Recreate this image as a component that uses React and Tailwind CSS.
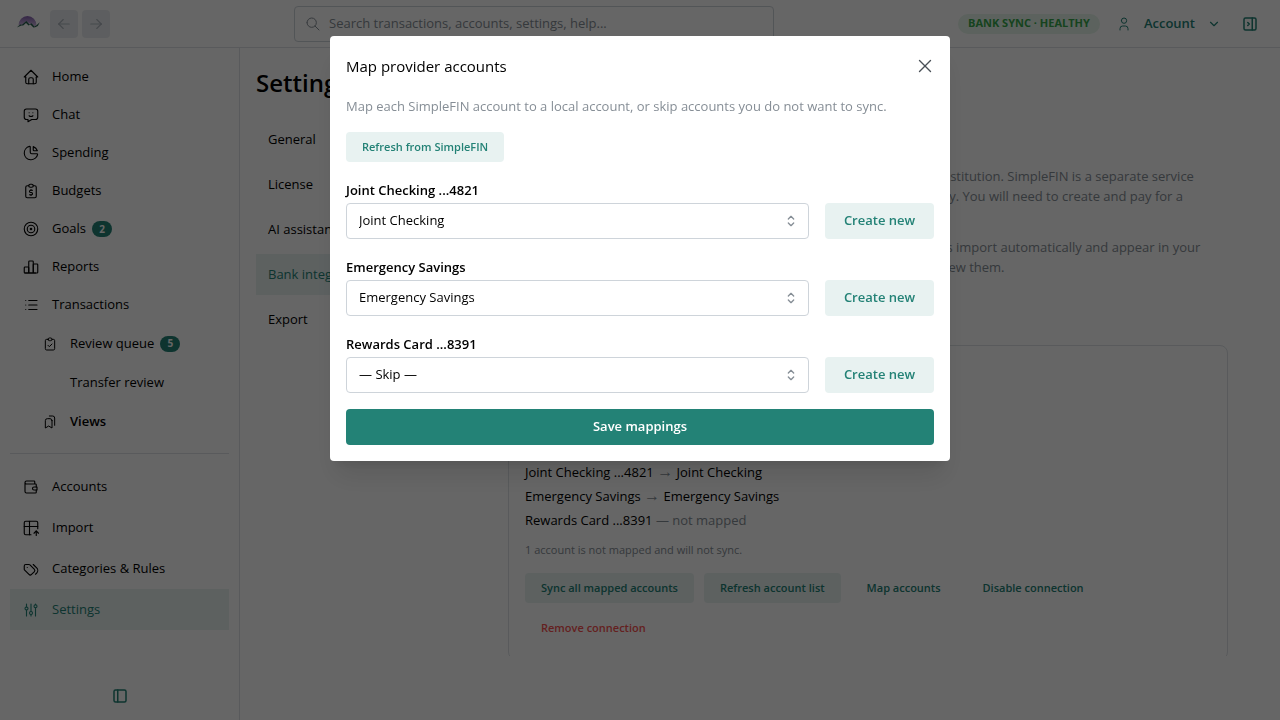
import {
  TbAdjustments,
  TbArrowLeft,
  TbArrowRight,
  TbBookmarks,
  TbChartBar,
  TbChartPie,
  TbChevronDown,
  TbClipboardCheck,
  TbHome,
  TbLayoutSidebar,
  TbLayoutSidebarRightCollapse,
  TbList,
  TbMessageChatbot,
  TbReportMoney,
  TbSearch,
  TbSelector,
  TbTableImport,
  TbTags,
  TbTarget,
  TbUser,
  TbWallet,
  TbX,
} from 'react-icons/tb';
import clsx from 'clsx';

const primaryNav = [
  { label: 'Home', icon: TbHome },
  { label: 'Chat', icon: TbMessageChatbot },
  { label: 'Spending', icon: TbChartPie },
  { label: 'Budgets', icon: TbReportMoney },
  { label: 'Goals', icon: TbTarget, count: 2 },
  { label: 'Reports', icon: TbChartBar },
];

const transactionNav = [
  { label: 'Review queue', icon: TbClipboardCheck, count: 5 },
  { label: 'Transfer review' },
  { label: 'Views', icon: TbBookmarks, bold: true },
];

const secondaryNav = [
  { label: 'Accounts', icon: TbWallet },
  { label: 'Import', icon: TbTableImport },
  { label: 'Categories & Rules', icon: TbTags },
  { label: 'Settings', icon: TbAdjustments, active: true },
];

const settingsTabs = ['General', 'License', 'AI assistant', 'Bank integrations', 'Export'];

const localAccounts = ['— Skip —', 'Joint Checking', 'Emergency Savings'];

const providerAccounts = [
  { id: 'checking', name: 'Joint Checking ...4821', mappedTo: 'Joint Checking' },
  { id: 'savings', name: 'Emergency Savings', mappedTo: 'Emergency Savings' },
  { id: 'card', name: 'Rewards Card ...8391', mappedTo: null },
];

const Logo = () => (
  <svg className="h-6 w-6" viewBox="0 0 24 24" fill="none">
    <defs>
      <linearGradient id="sun" x1="0" y1="0" x2="0" y2="1">
        <stop offset="0" stopColor="#8560b0" />
        <stop offset="1" stopColor="#cdbbe0" />
      </linearGradient>
    </defs>
    <path d="M2.5 13.5a9 9.5 0 0 1 18 0l-2 .8-4-2-4-2.8-4 3.5z" fill="url(#sun)" />
    <path
      d="M.8 15.4l3.4-2.8 1.8.2 4.4-3.8 3.2 3.4 1.8-1.2 3 3.2 1.8-1 3.6-3.2-2 3.8-2.6 1.2-1.8.2-3-2.8-1.8 1-2.6-2.6-2.8 2.6-1.8-.2z"
      fill="#255f4c"
    />
  </svg>
);

const CountBadge = ({ children }) => (
  <span className="-ml-1.5 flex h-4 w-5 items-center justify-center rounded-full bg-[#238276] text-[10px] font-bold text-white">
    {children}
  </span>
);

const NavItem = ({ label, icon: Icon, count, active, height = 'h-[38px]' }) => (
  <a
    href="#"
    className={clsx('flex items-center gap-3 px-3', height, active && 'bg-[#e8f2f1] text-[#238276]')}
  >
    <Icon size={18} strokeWidth={1.5} />
    <span>{label}</span>
    {count && <CountBadge>{count}</CountBadge>}
  </a>
);

const SubNavItem = ({ label, icon: Icon, count, bold }) => (
  <a href="#" className="flex h-[39px] items-center gap-3 pl-8">
    <span className="w-4">{Icon && <Icon size={16} strokeWidth={1.5} />}</span>
    <span className={clsx(bold && 'font-semibold')}>{label}</span>
    {count && <CountBadge>{count}</CountBadge>}
  </a>
);

const Header = () => (
  <header className="flex h-12 shrink-0 items-center justify-between border-b border-[#dee2e6] pl-4 pr-[21px]">
    <div className="flex items-center">
      <Logo />
      <div className="ml-2.5 flex gap-1">
        <button aria-label="Back" className="flex h-7 w-7 items-center justify-center rounded bg-[#e9ecef] text-[#adb5bd]">
          <TbArrowLeft size={18} strokeWidth={1.5} />
        </button>
        <button aria-label="Forward" className="flex h-7 w-7 items-center justify-center rounded bg-[#e9ecef] text-[#adb5bd]">
          <TbArrowRight size={18} strokeWidth={1.5} />
        </button>
      </div>
    </div>
    <label className="flex h-9 w-[480px] items-center gap-2 rounded border border-[#ced4da] px-2.5 text-[#868e96]">
      <TbSearch size={16} strokeWidth={1.5} />
      <input
        type="search"
        aria-label="Search"
        placeholder="Search transactions, accounts, settings, help..."
        className="flex-1 outline-none placeholder:text-[#868e96]"
      />
    </label>
    <div className="flex items-center text-[#238276]">
      <span className="flex h-5 items-center rounded-full bg-[#e6f6ea] px-2.5 text-[11px] font-bold text-[#37a94c]">
        BANK SYNC · HEALTHY
      </span>
      <button className="ml-4 flex items-center gap-3 font-semibold">
        <TbUser size={16} strokeWidth={1.5} />
        <span>Account</span>
        <TbChevronDown size={14} />
      </button>
      <button aria-label="Toggle side panel" className="ml-5">
        <TbLayoutSidebarRightCollapse size={18} />
      </button>
    </div>
  </header>
);

const Sidebar = () => (
  <aside className="flex w-60 shrink-0 flex-col border-r border-[#dee2e6] px-2.5 pt-2.5">
    <nav className="flex flex-col">
      {primaryNav.map((item) => (
        <NavItem key={item.label} {...item} />
      ))}
      <NavItem label="Transactions" icon={TbList} />
      {transactionNav.map((item) => (
        <SubNavItem key={item.label} {...item} />
      ))}
      <hr className="my-3 border-[#dee2e6]" />
      {secondaryNav.map((item) => (
        <NavItem key={item.label} height="h-[41px]" {...item} />
      ))}
    </nav>
    <button aria-label="Collapse sidebar" className="mb-[15px] mt-auto self-center text-[#238276]">
      <TbLayoutSidebar size={18} />
    </button>
  </aside>
);

const SmallButton = ({ variant = 'light', children }) => (
  <button
    className={clsx(
      'h-[30px] rounded px-4 text-[11px] font-semibold',
      variant === 'light' && 'bg-[#e8f2f1] text-[#238276]',
      variant === 'subtle' && 'text-[#238276]',
      variant === 'danger' && 'text-[#fa5252]'
    )}
  >
    {children}
  </button>
);

const ConnectionCard = () => (
  <section className="rounded-lg border border-[#dee2e6] px-4 pb-4 pt-[114px]">
    <ul className="leading-6">
      {providerAccounts.map(({ id, name, mappedTo }) => (
        <li key={id}>
          {name}{' '}
          <span className={clsx('text-[#868e96]', mappedTo && 'text-base leading-none')}>
            {mappedTo ? '→' : '— not mapped'}
          </span>{' '}
          {mappedTo}
        </li>
      ))}
    </ul>
    <p className="mt-2 text-[11px] leading-5 text-[#868e96]">1 account is not mapped and will not sync.</p>
    <div className="mt-[13px] flex flex-wrap gap-2.5">
      <SmallButton>Sync all mapped accounts</SmallButton>
      <SmallButton>Refresh account list</SmallButton>
      <SmallButton variant="subtle">Map accounts</SmallButton>
      <SmallButton variant="subtle">Disable connection</SmallButton>
      <div className="basis-full">
        <SmallButton variant="danger">Remove connection</SmallButton>
      </div>
    </div>
  </section>
);

const SettingsPage = () => (
  <main className="mb-16 min-w-0 flex-1 overflow-hidden px-4 pt-4">
    <h1 className="text-2xl font-semibold leading-[38px]">Settings</h1>
    <div className="mt-[17px] flex gap-4">
      <nav className="flex w-[236px] shrink-0 flex-col gap-1">
        {settingsTabs.map((tab) => (
          <a
            key={tab}
            href="#"
            className={clsx(
              'flex h-[41px] items-center px-3',
              tab === 'Bank integrations' && 'bg-[#e8f2f1] text-[#238276]'
            )}
          >
            {tab}
          </a>
        ))}
      </nav>
      <div className="w-[720px]">
        <h2 className="mt-2 text-lg font-semibold leading-7">Bank integrations</h2>
        <div className="mt-[11px] flex flex-col gap-[31px] leading-5 text-[#868e96]">
          <p>
            SimpleFIN Bridge securely links this app to your bank or other financial institution. SimpleFIN is a separate service
            <br />
            that is owned, run and supported by an independent third-party company. You will need to create and pay for a
          </p>
          <p>
            After you connect SimpleFIN and map your accounts, all new transactions import automatically and appear in your
            <br />
            review queue, where you can check, edit and categorize them as you review them.
          </p>
        </div>
        <div className="mt-[68px]">
          <ConnectionCard />
        </div>
      </div>
    </div>
  </main>
);

const MappingRow = ({ id, name, mappedTo }) => (
  <div className="flex items-end gap-4">
    <div className="flex-1">
      <label htmlFor={id} className="block font-semibold leading-[25px]">
        {name}
      </label>
      <div className="relative">
        <select
          id={id}
          defaultValue={mappedTo ?? localAccounts[0]}
          className="h-9 w-full appearance-none rounded border border-[#ced4da] bg-white px-3"
        >
          {localAccounts.map((account) => (
            <option key={account}>{account}</option>
          ))}
        </select>
        <TbSelector size={16} strokeWidth={2} className="pointer-events-none absolute right-2.5 top-2.5 text-[#868e96]" />
      </div>
    </div>
    <button className="h-9 w-[109px] rounded bg-[#e8f2f1] font-semibold text-[#238276]">Create new</button>
  </div>
);

const MapAccountsModal = () => (
  <div className="fixed inset-0 flex items-start justify-center bg-black/60 pt-9">
    <div
      role="dialog"
      aria-modal="true"
      aria-labelledby="map-title"
      className="flex w-[620px] flex-col gap-4 rounded bg-white p-4 shadow-xl"
    >
      <div className="flex h-7 items-center justify-between">
        <h2 id="map-title" className="text-[15px]">
          Map provider accounts
        </h2>
        <button aria-label="Close" className="flex h-7 w-[18px] items-center justify-center text-[#495057]">
          <TbX size={22} strokeWidth={1.5} className="shrink-0" />
        </button>
      </div>
      <p className="leading-5 text-[#868e96]">
        Map each SimpleFIN account to a local account, or skip accounts you do not want to sync.
      </p>
      <div className="flex">
        <SmallButton>Refresh from SimpleFIN</SmallButton>
      </div>
      {providerAccounts.map((account) => (
        <MappingRow key={account.id} {...account} />
      ))}
      <button className="h-9 rounded bg-[#238276] font-semibold text-white">Save mappings</button>
    </div>
  </div>
);

export default function App() {
  return (
    <div className="flex h-screen flex-col overflow-hidden bg-white font-['Open_Sans',sans-serif] text-[13px] text-black">
      <Header />
      <div className="flex min-h-0 flex-1">
        <Sidebar />
        <SettingsPage />
      </div>
      <MapAccountsModal />
    </div>
  );
}
